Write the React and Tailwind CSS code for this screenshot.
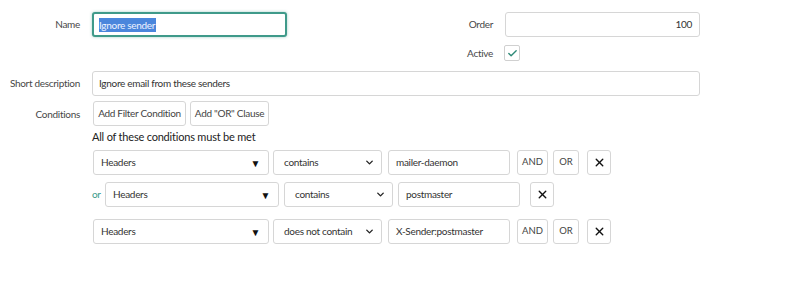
import { ChevronDown, X, Check } from 'lucide-react'

const TXT = 'text-[10px] tracking-[-0.3px]'

function Label({ children, className = '' }) {
  return (
    <div className={`w-[80px] shrink-0 whitespace-nowrap text-right text-[#474747] ${TXT} ${className}`}>
      {children}
    </div>
  )
}

function FieldSelect({ value, width }) {
  return (
    <div
      className={`flex h-[25px] shrink-0 items-center justify-between rounded-[3px] border border-[#d6d6d6] bg-white pl-[7px] pr-[8px] text-[#333] ${TXT} ${width}`}
    >
      <span>{value}</span>
      <span className="text-[10px] leading-none text-[#111]">▼</span>
    </div>
  )
}

function OpSelect({ value }) {
  return (
    <div className={`flex h-[25px] w-[109px] shrink-0 items-center justify-between whitespace-nowrap rounded-[3px] border border-[#d6d6d6] bg-white pl-[10px] pr-[6px] text-[#333] ${TXT}`}>
      <span>{value}</span>
      <ChevronDown className="h-[11px] w-[11px] text-[#222]" strokeWidth={3} />
    </div>
  )
}

function TextBox({ value }) {
  return (
    <div className={`flex h-[25px] w-[122px] shrink-0 items-center whitespace-nowrap rounded-[3px] border border-[#d6d6d6] bg-white px-[7px] text-[#333] ${TXT}`}>
      {value}
    </div>
  )
}

function SmallBtn({ children, width }) {
  return (
    <div
      className={`flex h-[25px] shrink-0 items-center justify-center rounded-[3px] border border-[#d6d6d6] bg-white text-[9.5px] text-[#444] ${width}`}
    >
      {children}
    </div>
  )
}

function RemoveBtn() {
  return (
    <div className="flex h-[25px] w-[24px] shrink-0 items-center justify-center rounded-[3px] border border-[#d6d6d6] bg-white">
      <X className="h-[13px] w-[13px] text-[#111]" strokeWidth={2.6} />
    </div>
  )
}

function ConditionRow({ op, value }) {
  return (
    <div className="flex items-center">
      <FieldSelect value="Headers" width="w-[176px]" />
      <div className="ml-[4px]">
        <OpSelect value={op} />
      </div>
      <div className="ml-[6px]">
        <TextBox value={value} />
      </div>
      <div className="ml-[7px] flex items-center gap-[5px]">
        <SmallBtn width="w-[31px]">AND</SmallBtn>
        <SmallBtn width="w-[26px]">OR</SmallBtn>
      </div>
      <div className="ml-[8px]">
        <RemoveBtn />
      </div>
    </div>
  )
}

export default function App() {
  return (
    <div className="h-[291px] w-[808px] bg-white font-['Lato','Noto_Sans',sans-serif]">
      <div className="w-[700px] pt-[12px]">
        {/* Name / Order */}
        <div className="flex h-[25px] items-center justify-between">
          <div className="flex items-center gap-[12px]">
            <Label>Name</Label>
            <div className="flex h-[25px] w-[195px] items-center rounded-[3px] border-2 border-[#3f9a8a] bg-white px-[5px] shadow-[0_0_3px_rgba(63,154,138,0.5)]">
              <span className={`bg-[#4a86dc] pr-[1px] leading-[14px] text-[#eef3ff] ${TXT}`}>Ignore sender</span>
            </div>
          </div>
          <div className="flex items-center gap-[12px]">
            <Label>Order</Label>
            <div className={`flex h-[25px] w-[195px] items-center justify-end rounded-[3px] border border-[#d6d6d6] bg-white px-[7px] text-[#333] ${TXT}`}>
              100
            </div>
          </div>
        </div>

        {/* Active */}
        <div className="mt-[8px] flex h-[16px] justify-end">
          <div className="flex w-[287px] items-center gap-[11px]">
            <Label>Active</Label>
            <div className="flex h-[16px] w-[16px] items-center justify-center rounded-[2px] border border-[#d0d0d0] bg-white">
              <Check className="h-[11px] w-[11px] text-[#2f8a78]" strokeWidth={3} />
            </div>
          </div>
        </div>

        {/* Short description */}
        <div className="mt-[10px] flex h-[25px] items-center gap-[12px]">
          <Label>Short description</Label>
          <div className={`flex h-[25px] flex-1 items-center rounded-[3px] border border-[#d6d6d6] bg-white px-[6px] text-[#333] ${TXT}`}>
            Ignore email from these senders
          </div>
        </div>

        {/* Conditions */}
        <div className="mt-[5px] flex gap-[12px]">
          <Label className="pt-[6px]">Conditions</Label>
          <div className="flex flex-col">
            <div className="ml-[1px] flex h-[25px] gap-[4px]">
              <div className={`flex h-[25px] w-[93px] items-center justify-center whitespace-nowrap rounded-[3px] border border-[#d6d6d6] bg-white text-[#444] ${TXT}`}>
                Add Filter Condition
              </div>
              <div className={`flex h-[25px] w-[79px] items-center justify-center whitespace-nowrap rounded-[3px] border border-[#d6d6d6] bg-white text-[#444] ${TXT}`}>
                Add "OR" Clause
              </div>
            </div>
            <div className="mt-[3px] h-[16px] whitespace-nowrap text-[11px] leading-[16px] tracking-[-0.2px] text-[#222]">
              All of these conditions must be met
            </div>
            <div className="ml-[1px] mt-[5px]">
              <ConditionRow op="contains" value="mailer-daemon" />
            </div>
            <div className="mt-[7px] flex h-[25px] items-center">
              <span className={`w-[13px] text-[#3a9a88] ${TXT}`}>or</span>
              <div className="flex items-center">
                <FieldSelect value="Headers" width="w-[174px]" />
                <div className="ml-[5px]">
                  <OpSelect value="contains" />
                </div>
                <div className="ml-[5px]">
                  <TextBox value="postmaster" />
                </div>
                <div className="ml-[10px]">
                  <RemoveBtn />
                </div>
              </div>
            </div>
            <div className="ml-[1px] mt-[12px]">
              <ConditionRow op="does not contain" value="X-Sender:postmaster" />
            </div>
          </div>
        </div>
      </div>
    </div>
  )
}
